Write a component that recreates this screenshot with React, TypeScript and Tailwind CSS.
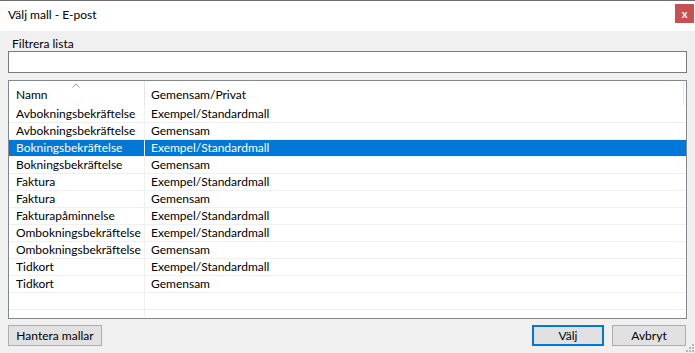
import { useState } from 'react';

const rows: [string, string][] = [
  ['Avbokningsbekräftelse', 'Exempel/Standardmall'],
  ['Avbokningsbekräftelse', 'Gemensam'],
  ['Bokningsbekräftelse', 'Exempel/Standardmall'],
  ['Bokningsbekräftelse', 'Gemensam'],
  ['Faktura', 'Exempel/Standardmall'],
  ['Faktura', 'Gemensam'],
  ['Fakturapåminnelse', 'Exempel/Standardmall'],
  ['Ombokningsbekräftelse', 'Exempel/Standardmall'],
  ['Ombokningsbekräftelse', 'Gemensam'],
  ['Tidkort', 'Exempel/Standardmall'],
  ['Tidkort', 'Gemensam'],
  ['', ''],
  ['', ''],
];

export default function App() {
  const [selected, setSelected] = useState(2);
  const [filter, setFilter] = useState('');

  return (
    <div
      className="w-[695px] h-[353px] flex flex-col bg-[#f0f0f0] border-t border-[#6e6e6e] text-[12px] text-black overflow-hidden"
      style={{ fontFamily: '"Segoe UI", Lato, "Noto Sans", sans-serif' }}
    >
      <div className="h-[30px] bg-white flex items-center justify-between pl-2 pr-[1px]">
        <span className="leading-none mt-[-3px]">Välj mall - E-post</span>
        <button className="w-[19px] h-[19px] bg-[#c75050] text-white text-[11px] font-bold leading-none flex items-center justify-center mt-[-5px]">
          x
        </button>
      </div>

      <div className="flex-1 flex flex-col px-2 pt-[5px]">
        <label className="pl-[4px] leading-[15px]">Filtrera lista</label>
        <input
          value={filter}
          onChange={(e) => setFilter(e.target.value)}
          className="h-[22px] bg-white border border-[#7a7a7a] outline-none px-1"
        />

        <div className="mt-[7px] h-[239px] bg-white border border-[#828790] flex flex-col overflow-hidden">
          <div className="h-[25px] flex shrink-0 relative">
            <div className="w-[136px] border-r border-[#e5e5e5] pl-[7px] pt-[5px] relative">
              Namn
              <svg className="absolute left-[63px] top-[2px]" width="8" height="5" viewBox="0 0 8 5">
                <path d="M0.5 4.5 L4 1 L7.5 4.5" fill="none" stroke="#9a9a9a" strokeWidth="1" />
              </svg>
            </div>
            <div className="flex-1 pl-[6px] pt-[5px]">Gemensam/Privat</div>
            <div className="absolute right-[2px] top-[1px] h-[23px] w-[1px] bg-[#e5e5e5]" />
          </div>
          {rows.map(([name, type], i) => {
            const active = i === selected && name !== '';
            return (
              <div
                key={i}
                onClick={() => name && setSelected(i)}
                className={`h-[17px] shrink-0 flex border-b border-[#f0f0f0] leading-[16px] ${
                  active ? 'bg-[#0078d7] text-white' : ''
                }`}
              >
                <div className="w-[136px] border-r border-[#f0f0f0] pl-[7px] whitespace-nowrap">{name}</div>
                <div className="flex-1 pl-[6px] whitespace-nowrap">{type}</div>
              </div>
            );
          })}
        </div>

        <div className="mt-[6px] flex items-center">
          <button className="h-[21px] w-[94px] bg-[#e1e1e1] border border-[#adadad] leading-none">
            Hantera mallar
          </button>
          <div className="flex-1" />
          <button className="h-[21px] w-[72px] bg-[#e1e1e1] border-2 border-[#0078d7] leading-none">
            Välj
          </button>
          <button className="ml-[8px] mr-[1px] h-[21px] w-[74px] bg-[#e1e1e1] border border-[#adadad] leading-none">
            Avbryt
          </button>
        </div>
      </div>

      <div className="relative h-0">
        <svg className="absolute right-[1px] bottom-[1px]" width="8" height="8" viewBox="0 0 8 8">
          <rect x="6" y="0" width="2" height="2" fill="#b8b8b8" />
          <rect x="3" y="3" width="2" height="2" fill="#b8b8b8" />
          <rect x="6" y="3" width="2" height="2" fill="#b8b8b8" />
          <rect x="0" y="6" width="2" height="2" fill="#b8b8b8" />
          <rect x="3" y="6" width="2" height="2" fill="#b8b8b8" />
          <rect x="6" y="6" width="2" height="2" fill="#b8b8b8" />
        </svg>
      </div>
    </div>
  );
}
